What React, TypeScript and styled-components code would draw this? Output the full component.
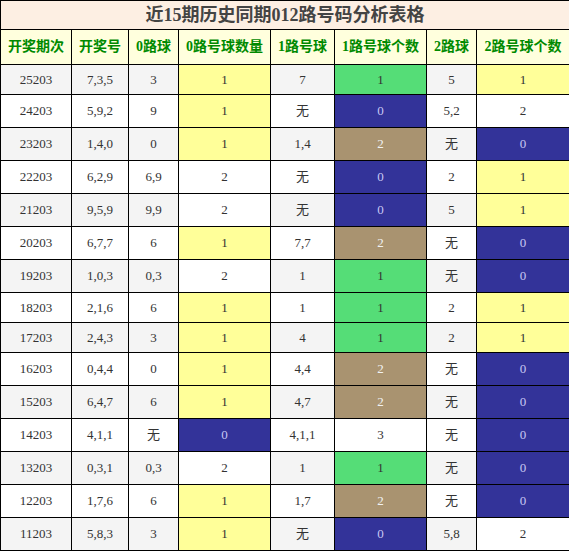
import { createGlobalStyle } from "styled-components";
import styled from "styled-components";

const GlobalStyle = createGlobalStyle`
  body {
    margin: 0;
    background: #ffffff;
  }
`;

const columns = ["开奖期次", "开奖号", "0路球", "0路号球数量", "1路号球", "1路号球个数", "2路球", "2路号球个数"];
const widths = [71, 57, 50, 92, 64, 92, 50, 93];

const rows = [
  ["25203", "7,3,5", "3", "1", "7", "1", "5", "1"],
  ["24203", "5,9,2", "9", "1", "无", "0", "5,2", "2"],
  ["23203", "1,4,0", "0", "1", "1,4", "2", "无", "0"],
  ["22203", "6,2,9", "6,9", "2", "无", "0", "2", "1"],
  ["21203", "9,5,9", "9,9", "2", "无", "0", "5", "1"],
  ["20203", "6,7,7", "6", "1", "7,7", "2", "无", "0"],
  ["19203", "1,0,3", "0,3", "2", "1", "1", "无", "0"],
  ["18203", "2,1,6", "6", "1", "1", "1", "2", "1"],
  ["17203", "2,4,3", "3", "1", "4", "1", "2", "1"],
  ["16203", "0,4,4", "0", "1", "4,4", "2", "无", "0"],
  ["15203", "6,4,7", "6", "1", "4,7", "2", "无", "0"],
  ["14203", "4,1,1", "无", "0", "4,1,1", "3", "无", "0"],
  ["13203", "0,3,1", "0,3", "2", "1", "1", "无", "0"],
  ["12203", "1,7,6", "6", "1", "1,7", "2", "无", "0"],
  ["11203", "5,8,3", "3", "1", "无", "0", "5,8", "2"],
];

type Tone = "plain" | "blue" | "yellow" | "green" | "tan" | "white";

// count columns get a colour by value
function toneFor(col: number, value: string): Tone {
  if (col === 3 || col === 7) {
    if (value === "0") return "blue";
    if (value === "1") return "yellow";
    return "white";
  }
  if (col === 5) {
    if (value === "0") return "blue";
    if (value === "1") return "green";
    if (value === "2") return "tan";
    return "white";
  }
  return "plain";
}

const bgs: Record<Tone, string> = {
  plain: "transparent",
  blue: "#333399",
  yellow: "#ffff99",
  green: "#55dd77",
  tan: "#a99370",
  white: "#ffffff",
};

const fgs: Record<Tone, string> = {
  plain: "#333333",
  blue: "#c8c8f4",
  yellow: "#333333",
  green: "#333333",
  tan: "#f2f2f2",
  white: "#333333",
};

export default function App() {
  return (
    <>
      <GlobalStyle />
      <Table>
        <colgroup>
          {widths.map((w, i) => (
            <col key={i} style={{ width: w }} />
          ))}
        </colgroup>
        <thead>
          <tr>
            <Title colSpan={8}>近15期历史同期012路号码分析表格</Title>
          </tr>
          <tr>
            {columns.map((c) => (
              <HeadCell key={c}>{c}</HeadCell>
            ))}
          </tr>
        </thead>
        <tbody>
          {rows.map((r, i) => (
            <Row key={r[0]} $striped={i % 2 === 0} $tall={r.includes("无")}>
              {r.map((v, j) => (
                <Cell key={j} $tone={toneFor(j, v)}>
                  {v}
                </Cell>
              ))}
            </Row>
          ))}
        </tbody>
      </Table>
    </>
  );
}

const Table = styled.table`
  width: 569px;
  border-collapse: collapse;
  table-layout: fixed;
  font-family: "Liberation Serif", "Noto Sans CJK SC", serif;
`;

const Title = styled.th`
  background: #fdefe3;
  color: #444444;
  font-size: 18px;
  line-height: 20px;
  font-weight: bold;
  height: 28px;
  padding: 0;
  border: 1px solid #000;
  text-align: center;
`;

const HeadCell = styled.th`
  background: #ffffdd;
  color: #008a00;
  font-size: 14px;
  line-height: 18px;
  font-weight: bold;
  height: 34px;
  padding: 0;
  border: 1px solid #000;
  text-align: center;
  white-space: nowrap;
`;

const Row = styled.tr<{ $striped: boolean; $tall: boolean }>`
  background: ${(p) => (p.$striped ? "#f4f4f4" : "#ffffff")};
  height: ${(p) => (p.$tall ? "33px" : "30px")};
`;

const Cell = styled.td<{ $tone: Tone }>`
  background: ${(p) => bgs[p.$tone]};
  color: ${(p) => fgs[p.$tone]};
  font-size: 13px;
  line-height: 16px;
  padding: 0;
  border: 1px solid #000;
  text-align: center;
`;
